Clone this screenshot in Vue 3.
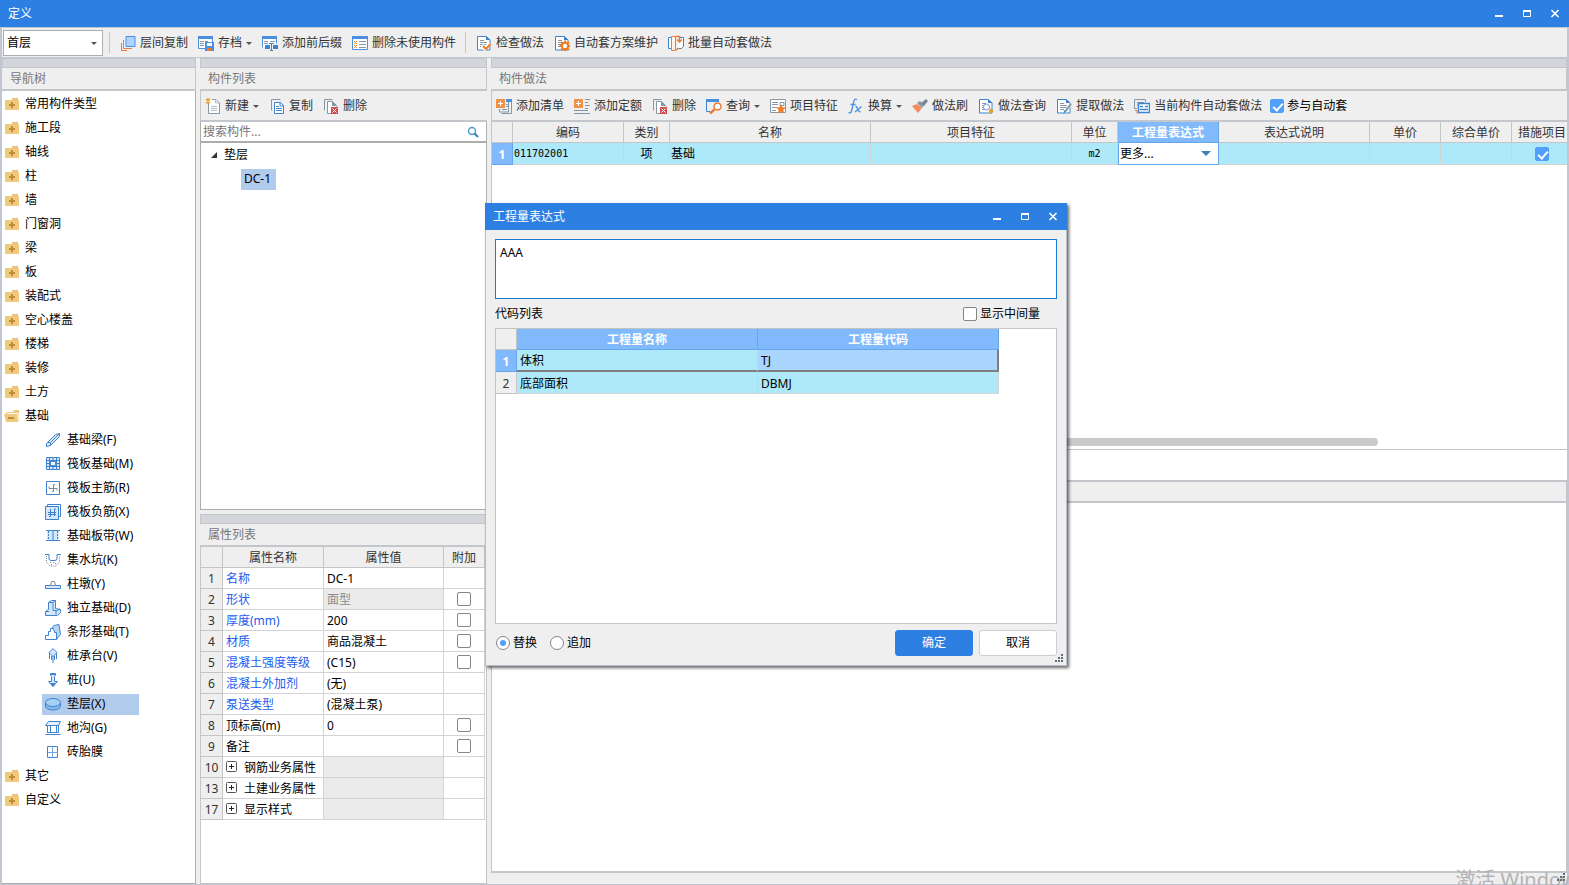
<script setup>
import { ref } from 'vue'

const folder = '<path d="M8 2h6v2H8z" fill="#eac078"/><path d="M1 4h14v10H1z" fill="#f0c97f"/><path d="M7 6h2v2h2v2H9v2H7v-2H5V8h2z" fill="#bd8c34"/>'
const page = '<path d="M1.500 1.500h9l3.500 3.500v10h-12.500z" fill="#fff" stroke="#3f83cf"/><path d="M10 1v4h4.500z" fill="#3f83cf"/><path d="M4 5.500h4M4 7.500h7M4 9.500h7M4 11.500h4" stroke="#8797a5"/>'

const icons = {
  folder,
  folderOpen: '<path d="M2 13V4h7l1-2h5v11z" fill="#f0c97f"/><path d="M3 5.500h11v7" stroke="#fff" fill="none"/><path d="M0 6h12l2 8H2z" fill="#f0c97f"/><path d="M4 9h6v2H4z" fill="#bd8c34"/>',
  layers: '<path d="M6 1.500h9v10H6z" fill="#add4ff" stroke="#4a8fe0"/><path d="M3.500 5v8.500H12M1.500 8v7.500H7" fill="none" stroke="#e87b36"/>',
  archive: '<path d="M.500 1.500h14v12H.500z" fill="#fff" stroke="#4a8fe0"/><path d="M0 1h15v3H0z" fill="#4a8fe0"/><path d="M2 6.500h4M7 6.500h3M2 8.500h4M2 10.500h4" stroke="#8797a5"/><path d="M7 7h9v9H7z" fill="#4a8fe0"/><path d="M9 8h5v3H9z" fill="#fff"/><path d="M9 13h4v3H9z" fill="#f07c24"/>',
  affix: '<path d="M.500 12.500V1.500h14v7" fill="#fff" stroke="#4a8fe0"/><path d="M0 1h15v3H0z" fill="#4a8fe0"/><path d="M2 6.500h4M8 6.500h5M2 8.500h4" stroke="#8797a5"/><path d="M3 10h5v4H3zM11 10h5v4h-5z" fill="#3f83cf"/><path d="M7 8.500h5M9.500 8v8M8 15.500h3" stroke="#3f83cf" fill="none"/>',
  unused: '<path d="M.500 1.500h15v13H.500z" fill="#fff" stroke="#4a8fe0"/><path d="M0 1h16v3H0z" fill="#4a8fe0"/><path d="M2 6l3 3M5 6L2 9M2 10l3 3M5 10l-3 3" stroke="#f09a32"/><path d="M7 6.500h7M7 9.500h7M7 12.500h7" stroke="#8797a5"/>',
  check: page + '<path d="M6 10.500l3 3 5-5" fill="none" stroke="#fff" stroke-width="4"/><path d="M7 11l3 3 4.500-5" fill="none" stroke="#f07c24" stroke-width="2"/>',
  gear: page + '<circle cx="11" cy="11" r="3.200" fill="#fff" stroke="#f07c24" stroke-width="2"/><path d="M11 5.500v2M11 14.500v2M5.500 11h2M14.500 11h2M7 7l1.500 1.500M13.500 13.500L15 15M15 7l-1.500 1.500M8.500 13.500L7 15" stroke="#f07c24" stroke-width="2"/>',
  batch: '<path d="M4 2.500H.500v11H4M12 2.500h3.500v9l-2 2H9" fill="#fff" stroke="#3f83cf"/><path d="M3.500 1.500h4v14h-4z" fill="#fff3ea" stroke="#e87b36"/><path d="M7.500 1.500h4v5M9 4.500L11.500 7 14 4.500M8 15l3-2" fill="none" stroke="#e87b36" stroke-width="1.500"/>',
  create: '<path d="M3.500 5v10.500h11V5L11 1.500H7" fill="#fff" stroke="#8797a5"/><path d="M10.500 1.500V5h4M6 8.500h6M6 10.500h6M6 12.500h6" fill="none" stroke="#b5bec7"/><path d="M1 1l4 4M5 1L1 5M3 0v6" stroke="#f0a030" stroke-width="1.500"/>',
  copy: '<path d="M2.500 12.500V1.500h9" fill="none" stroke="#8797a5"/><path d="M5.500 4.500h6l3 3v8h-9z" fill="#fff" stroke="#3f83cf"/><path d="M11 4v4h4M7 8.500h3M7 10.500h6M7 12.500h6" fill="none" stroke="#3f83cf"/>',
  remove: '<path d="M1.500 12.500V1.500h8" fill="none" stroke="#8797a5"/><path d="M10 15.500H4.500v-12h5l4 4v1" fill="#fff" stroke="#8797a5"/><path d="M9 3v5h5z" fill="#8797a5"/><path d="M8 9h7v7H8z" fill="#d14d51"/><path d="M9.500 10.500l4 4M13.500 10.500l-4 4" stroke="#fff"/>',
  addList: '<path d="M3.500 11v3h9v-10M5.500 15.500h10V3" fill="none" stroke="#8797a5"/><path d="M10 1h6v3h-6z" fill="#4a8fe0"/><path d="M6 11.500h5M10 6.500h2M10 8.500h2" stroke="#8797a5"/><path d="M0 1h9v9H0z" fill="#f09346"/><path d="M4.500 3v5M2 5.500h5" stroke="#fff"/>',
  addQuota: '<path d="M11 1.500h5M11 4.500h3M11 7.500h5M11 10.500h3M0 12.500h14M0 15.500h16" stroke="#8797a5"/><path d="M0 1h9v9H0z" fill="#f09346"/><path d="M4.500 3v5M2 5.500h5" stroke="#fff"/>',
  query: '<path d="M.500 2v11.500H4" fill="none" stroke="#3f83cf"/><path d="M0 1h13v3H0z" fill="#4a8fe0"/><circle cx="11.500" cy="8.500" r="3.500" fill="#fff" stroke="#e87b36" stroke-width="1.500"/><path d="M8.500 11.500L4 15.500" stroke="#e87b36" stroke-width="2.500"/>',
  feature: '<path d="M.500 1.500h15v13H.500z" fill="#fff" stroke="#8797a5"/><path d="M2 4.500h6M2 6.500h6M2 9.500h5M2 12.500h4M10 4.500h4v3h-4z" stroke="#8797a5" fill="none"/><path d="M11 6l1.400 3.200 3.600.3-2.700 2.300.8 3.700-3.100-2-3.100 2 .8-3.700L6 9.500l3.600-.3z" fill="#f07c24"/>',
  fx: '<path d="M9 1.500C6 0 5.500 4 4.500 9S3 16 .500 14.500M2.500 6.500h5" fill="none" stroke="#4a8fe0" stroke-width="1.300"/><path d="M7.500 8c2 0 2 6 5 6M13.500 8.500L7 14" fill="none" stroke="#4a8fe0" stroke-width="1.300"/>',
  brush: '<path d="M0 8l5-2 5 4-4 5z" fill="#f58b5b"/><path d="M5 5l3-2 4 4-2 3z" fill="#8797a5"/><path d="M9 5l5-4 2 2-4 5z" fill="#7b8894"/>',
  lookup: page + '<circle cx="8.500" cy="9" r="3" fill="#fff" stroke="#6b9be0"/><path d="M13 10l2.500 3-2.500 3-2.500-3z" fill="#f09a22"/>',
  extract: page + '<path d="M14.500 4.500l1.500 2-6 8-2 .5.500-2.500z" fill="#8797a5" stroke="#fff" stroke-width=".5"/><path d="M8 12l2 2-2.500 2z" fill="#21a6b8"/>',
  current: '<path d="M3 10.500H.500v-9h11V4" fill="none" stroke="#8797a5"/><path d="M3 4.500h7M3 7h1" stroke="#8797a5"/><path d="M1 12.500h2v3" stroke="#e87b36" fill="none"/><path d="M4.500 5.500h11v9h-11z" fill="#fff" stroke="#3f83cf" stroke-width="1.500"/><path d="M6 8.500h3M11 8.500h3M6 11.500h8" stroke="#3f83cf" stroke-width="1.500"/>',
  beam: '<path d="M1.500 11.500l9-9 4-1 0 3-9 9-4 1z" fill="#d5e7fb" stroke="#3f83cf"/><path d="M5.500 13.500v-3h-3M6 10l8-8" fill="none" stroke="#3f83cf"/>',
  raft: '<path d="M1.500 1.500h13v12h-13z" fill="#d5e7fb" stroke="#3f83cf"/><path d="M4.500 2v11M11.500 2v11M2 4.500h12M2 10.500h12M8 2v3M8 10v3M2 7.500h3M11 7.500h3" fill="none" stroke="#3f83cf"/><path d="M5.500 5.500h5v4h-5z" fill="#fff" stroke="#3f83cf"/>',
  rebarMain: '<path d="M1.500 1.500h13v13h-13z" fill="#fff" stroke="#3f83cf"/><path d="M10 4.500H8.500v7H7M4 6.500v2h8v2" fill="none" stroke="#7c8c9c"/>',
  rebarNeg: '<path d="M2.500 2V.500h13v12h-2" fill="#fff" stroke="#3f83cf"/><path d="M.500 2.500h13v13H.500z" fill="#d5e7fb" stroke="#3f83cf"/><path d="M5.500 5v7.500H4M9.500 12V5H11M3 8.500h8M3 10.500h8" fill="none" stroke="#3f83cf"/>',
  strip: '<path d="M2 3h12v10H2z" fill="#d5e7fb"/><path d="M1 2.500h14M1 12.500h14M8 3v10" stroke="#3f83cf"/><path d="M3.500 3v10M12.500 3v10" stroke="#3f83cf" stroke-dasharray="2 1"/>',
  pit: '<path d="M0 2.500h4v5l2 1h4l2-1v-5h4" fill="none" stroke="#3f83cf"/><path d="M1.500 4v6l3.500 4h6l3.500-4V4" fill="none" stroke="#7c8c9c" stroke-dasharray="1 1"/><path d="M5 10.500h1M8 10.500h1M10 11.500h1M6 12.500h1" stroke="#7c8c9c"/>',
  pier: '<path d="M.500 9.500h15v3H.500z" fill="#d5e7fb" stroke="#3f83cf"/><path d="M6.500 5.500h3l1 4h-5z" fill="#fff" stroke="#7c8c9c"/>',
  isolated: '<path d="M.500 11.500l3-2v-7l3-2h4v8l5 1v3l-3 3H.500z" fill="#d5e7fb" stroke="#3f83cf"/><path d="M4 2.500h4v8h3v4M8 2.500l2-2M11 11l4-2M1 11.500h3" fill="none" stroke="#3f83cf"/>',
  stripBase: '<path d="M6 5.500l3-4 5-1 1.500 10-4 5H8z" fill="#b9d6f6" stroke="#3f83cf"/><path d="M.500 15.500v-4h3v-4h2v-3h3l1 4h2v7z" fill="#fff" stroke="#3f83cf"/>',
  cap: '<path d="M8 .500l4 4-4 4-4-4z" fill="#d5e7fb" stroke="#3f83cf"/><path d="M4.500 5v6M11.500 5v6M8 8v7M6.500 8v4M9.500 8v4" stroke="#3f83cf"/>',
  pile: '<path d="M5.500 1.500h5v2l-1 1v5h3l-4.500 5-4.500-5h3v-5l-1-1z" fill="#d5e7fb" stroke="#3f83cf"/><path d="M6 2h4v1H6zM5 11h6l-3 4z" fill="#3f83cf"/>',
  cushion: '<path d="M.500 7v3c0 2.500 3.500 4 7.500 4s7.500-1.500 7.500-4V7" fill="#83b7e8" stroke="#3f83cf"/><ellipse cx="8" cy="6.500" rx="7.500" ry="4" fill="#a6d0f3" stroke="#3f83cf"/>',
  trench: '<path d="M.500 5.500l3-4h12l-2 4zM2.500 6v7M5.500 6v7M11.500 6v7M13.500 5v8M.500 14.500h15M3 12.500h10" fill="#e5f0fc" stroke="#3f83cf"/>',
  brick: '<path d="M2.500 2.500h10v11h-10z" fill="#fff" stroke="#3f83cf"/><path d="M7.500 2v12M3 8.500h10" stroke="#6ea4e0"/>',
}

const mainTools = [
  [['layers', '层间复制'], ['archive', '存档', true], ['affix', '添加前后缀'], ['unused', '删除未使用构件']],
  [['check', '检查做法'], ['gear', '自动套方案维护'], ['batch', '批量自动套做法']],
]
const listTools = [['create', '新建', true], ['copy', '复制'], ['remove', '删除']]
const methodTools = [
  ['addList', '添加清单'], ['addQuota', '添加定额'], ['remove', '删除'], ['query', '查询', true],
  ['feature', '项目特征'], ['fx', '换算', true], ['brush', '做法刷'], ['lookup', '做法查询'],
  ['extract', '提取做法'], ['current', '当前构件自动套做法'],
]
const nav = [
  ...['常用构件类型', '施工段', '轴线', '柱', '墙', '门窗洞', '梁', '板', '装配式', '空心楼盖', '楼梯', '装修', '土方'].map(t => ({ t, icon: 'folder' })),
  { t: '基础', icon: 'folderOpen' },
  ...[['beam', '基础梁(F)'], ['raft', '筏板基础(M)'], ['rebarMain', '筏板主筋(R)'], ['rebarNeg', '筏板负筋(X)'],
    ['strip', '基础板带(W)'], ['pit', '集水坑(K)'], ['pier', '柱墩(Y)'], ['isolated', '独立基础(D)'],
    ['stripBase', '条形基础(T)'], ['cap', '桩承台(V)'], ['pile', '桩(U)'], ['cushion', '垫层(X)'],
    ['trench', '地沟(G)'], ['brick', '砖胎膜']].map(([icon, t]) => ({ t, icon, child: true })),
  { t: '其它', icon: 'folder' },
  { t: '自定义', icon: 'folder' },
]
const props = [
  { n: 1, k: '名称', v: 'DC-1', link: true },
  { n: 2, k: '形状', v: '面型', link: true, off: true, box: true },
  { n: 3, k: '厚度(mm)', v: '200', link: true, box: true },
  { n: 4, k: '材质', v: '商品混凝土', link: true, box: true },
  { n: 5, k: '混凝土强度等级', v: '(C15)', link: true, box: true },
  { n: 6, k: '混凝土外加剂', v: '(无)', link: true },
  { n: 7, k: '泵送类型', v: '(混凝土泵)', link: true },
  { n: 8, k: '顶标高(m)', v: '0', box: true },
  { n: 9, k: '备注', v: '', box: true },
  { n: 10, k: '钢筋业务属性', v: '', off: true, group: true },
  { n: 13, k: '土建业务属性', v: '', off: true, group: true },
  { n: 17, k: '显示样式', v: '', off: true, group: true },
]
const selected = ref('垫层(X)')
const expr = ref('AAA')
const mode = ref('replace')
const auto = ref(true)
const measure = ref(true)
const middle = ref(false)
</script>

<template>
  <div class="window">
    <header class="titlebar">
      <span>定义</span>
      <div class="controls">
        <button aria-label="最小化"><svg viewBox="0 0 28 27"><path d="M10 15h8v2h-8z" fill="#fff" /></svg></button>
        <button aria-label="最大化"><svg viewBox="0 0 28 27"><path d="M10.500 11v5.500h7V11" fill="none" stroke="#fff" /><path d="M10 10h8v2h-8z" fill="#fff" /></svg></button>
        <button aria-label="关闭"><svg viewBox="0 0 28 27"><path d="M10.500 10l7 7M17.500 10l-7 7" stroke="#fff" stroke-width="1.600" /></svg></button>
      </div>
    </header>

    <div class="frame">
      <div class="toolbar main-tools">
        <div class="combo floor">
          <select aria-label="楼层"><option>首层</option></select>
        </div>
        <template v-for="(group, g) in mainTools" :key="g">
          <i class="sep"></i>
          <button v-for="t in group" :key="t[1]" class="tool">
            <svg class="ico" viewBox="0 0 16 16" v-html="icons[t[0]]"></svg>{{ t[1] }}<i v-if="t[2]" class="caret"></i>
          </button>
        </template>
      </div>

      <div class="docks">
        <aside class="nav">
          <div class="strip"></div>
          <h2>导航树</h2>
          <ul class="tree nav-tree">
            <li v-for="n in nav" :key="n.t">
              <button :class="{ child: n.child, on: n.t === selected }" @click="selected = n.t">
                <svg class="ico" viewBox="0 0 16 16" v-html="icons[n.icon]"></svg>{{ n.t }}
              </button>
            </li>
          </ul>
        </aside>

        <div class="middle">
          <section class="panel">
            <div class="strip"></div>
            <h2>构件列表</h2>
            <div class="toolbar actions">
              <button v-for="t in listTools" :key="t[1]" class="tool">
                <svg class="ico" viewBox="0 0 16 16" v-html="icons[t[0]]"></svg>{{ t[1] }}<i v-if="t[2]" class="caret"></i>
              </button>
            </div>
            <div class="search">
              <input type="text" aria-label="搜索构件" placeholder="搜索构件...">
              <svg class="glass" viewBox="0 0 12 12"><circle cx="5" cy="5" r="3.500" fill="none" stroke="#4b9ccd" stroke-width="1.500" /><path d="M7.500 7.500L11 11" stroke="#2f82b8" stroke-width="2" /></svg>
            </div>
            <ul class="tree part-tree">
              <li><button><svg class="arrow" viewBox="0 0 8 8"><path d="M7 1v6H1z" fill="#333" /></svg>垫层</button></li>
              <li><button class="part on">DC-1</button></li>
            </ul>
          </section>

          <section class="panel">
            <div class="strip"></div>
            <h2>属性列表</h2>
            <div class="sheet">
              <table class="props">
                <colgroup><col class="p0"><col class="p1"><col class="p2"><col class="p3"></colgroup>
                <thead><tr><th></th><th>属性名称</th><th>属性值</th><th>附加</th></tr></thead>
                <tbody>
                  <tr v-for="p in props" :key="p.n">
                    <th>{{ p.n }}</th>
                    <td :class="{ link: p.link }">
                      <button v-if="p.group" class="plus" aria-label="展开"><svg viewBox="0 0 11 11"><rect x=".5" y=".5" width="10" height="10" rx="1" fill="#fff" stroke="#555" /><path d="M3 5.500h5M5.500 3v5" stroke="#222" /></svg></button>{{ p.k }}
                    </td>
                    <td :class="{ off: p.off }">{{ p.v }}</td>
                    <td class="mid tick"><input v-if="p.box" type="checkbox" :aria-label="p.k + '附加'"></td>
                  </tr>
                </tbody>
              </table>
            </div>
          </section>
        </div>

        <main class="method">
          <section class="panel upper">
            <div class="strip"></div>
            <h2>构件做法</h2>
            <div class="toolbar actions">
              <button v-for="t in methodTools" :key="t[1]" class="tool">
                <svg class="ico" viewBox="0 0 16 16" v-html="icons[t[0]]"></svg>{{ t[1] }}<i v-if="t[2]" class="caret"></i>
              </button>
              <label class="opt auto"><input v-model="auto" type="checkbox">参与自动套</label>
            </div>
            <div class="grid-area">
              <table class="items">
                <colgroup>
                  <col class="c21"><col class="c111"><col class="c46"><col class="c201"><col class="c201"><col class="c46"><col class="c101"><col class="c151"><col class="c71"><col class="c71"><col>
                </colgroup>
                <thead>
                  <tr><th></th><th>编码</th><th>类别</th><th>名称</th><th>项目特征</th><th>单位</th><th class="hot">工程量表达式</th><th>表达式说明</th><th>单价</th><th>综合单价</th><th>措施项目</th></tr>
                </thead>
                <tbody>
                  <tr>
                    <th class="hot">1</th>
                    <td class="mono">011702001</td>
                    <td class="mid">项</td>
                    <td>基础</td>
                    <td></td>
                    <td class="mid mono">m2</td>
                    <td class="editor"><div class="combo blue"><select aria-label="工程量表达式"><option>更多...</option></select></div></td>
                    <td></td><td></td><td></td>
                    <td class="mid tick"><input v-model="measure" type="checkbox" aria-label="措施项目"></td>
                  </tr>
                </tbody>
              </table>
              <div class="scroll"><i></i></div>
            </div>
          </section>
          <div class="blank"></div>
          <div class="divider"></div>
          <div class="detail"></div>
          <footer class="status"></footer>
        </main>
      </div>
    </div>

    <div class="watermark">激活 Windows</div>
    <svg class="grip" viewBox="0 0 8 8"><path d="M6 0h2v2H6zM3 3h2v2H3zM6 3h2v2H6zM0 6h2v2H0zM3 6h2v2H3zM6 6h2v2H6z" fill="#666c76" /></svg>

    <div class="dialog" role="dialog" aria-label="工程量表达式">
      <header class="titlebar">
        <span>工程量表达式</span>
        <div class="controls">
          <button aria-label="最小化"><svg viewBox="0 0 28 27"><path d="M10 15h8v2h-8z" fill="#fff" /></svg></button>
          <button aria-label="最大化"><svg viewBox="0 0 28 27"><path d="M10.500 11v5.500h7V11" fill="none" stroke="#fff" /><path d="M10 10h8v2h-8z" fill="#fff" /></svg></button>
          <button aria-label="关闭"><svg viewBox="0 0 28 27"><path d="M10.500 10l7 7M17.500 10l-7 7" stroke="#fff" stroke-width="1.600" /></svg></button>
        </div>
      </header>
      <div class="body">
        <textarea v-model="expr" aria-label="表达式" spellcheck="false"></textarea>
        <div class="row caption">
          <span>代码列表</span>
          <label class="opt"><input v-model="middle" type="checkbox">显示中间量</label>
        </div>
        <div class="codes-box">
          <table class="codes">
            <colgroup><col class="c21"><col class="c241"><col class="c241"></colgroup>
            <thead><tr><th></th><th class="hot">工程量名称</th><th class="hot">工程量代码</th></tr></thead>
            <tbody>
              <tr class="current"><th class="hot">1</th><td>体积</td><td>TJ</td></tr>
              <tr><th>2</th><td>底部面积</td><td>DBMJ</td></tr>
            </tbody>
          </table>
        </div>
        <div class="row foot">
          <div class="modes">
            <label class="opt"><input v-model="mode" type="radio" name="mode" value="replace">替换</label>
            <label class="opt"><input v-model="mode" type="radio" name="mode" value="append">追加</label>
          </div>
          <div class="btns">
            <button class="btn primary">确定</button>
            <button class="btn">取消</button>
          </div>
        </div>
      </div>
      <svg class="grip" viewBox="0 0 8 8"><path d="M6 0h2v2H6zM3 3h2v2H3zM6 3h2v2H6zM0 6h2v2H0zM3 6h2v2H3zM6 6h2v2H6z" fill="#666c76" /></svg>
    </div>
  </div>
</template>

<style>
html, body { margin: 0; overflow: hidden; }
</style>

<style scoped>
* { box-sizing: border-box; }
.window {
  position: relative; display: flex; flex-direction: column; height: 100vh; overflow: hidden;
  background: #efefef; color: #000; font: 12px/20px "Noto Sans", "Noto Sans CJK SC", sans-serif;
}
button, input, select, textarea { font: inherit; color: inherit; margin: 0; padding: 0; border: 0; background: none; outline: none; }
svg { display: block; flex: none; }
ul { margin: 0; padding: 0; list-style: none; }
table { border-collapse: separate; border-spacing: 0; table-layout: fixed; line-height: 18px; }
th, td { padding: 2px 0 0; overflow: hidden; white-space: nowrap; font-weight: 400; border-right: 1px solid #d3d3d3; border-bottom: 1px solid #d3d3d3; }
th { background: #efefef; color: #333; border-color: #c5c5c5; text-align: center; }

.titlebar { display: flex; flex: none; justify-content: space-between; height: 27px; padding-left: 8px; line-height: 27px; background: #2d7fe2; color: #fff; }
.controls { display: flex; }
.controls button, .controls svg { width: 28px; height: 27px; }

.frame { display: flex; flex: 1; flex-direction: column; min-height: 0; border: solid #c0c6d2; border-width: 0 2px 1px; }
.toolbar { display: flex; flex: none; align-items: center; gap: 10px; overflow: hidden; white-space: nowrap; }
.main-tools { height: 31px; border: solid #c3c6ca; border-width: 1px 0; }
.tool { display: flex; align-items: center; gap: 4px; padding-top: 1px; color: #333; }
.ico { width: 16px; height: 16px; }
.caret { border: 3px solid transparent; border-top-color: #555; border-bottom: 0; }
.sep { width: 1px; height: 21px; background: #c4c6ca; }
.sep ~ .sep { margin-left: -1px; }
.combo { position: relative; background: #fff; }
.combo select { display: block; width: 100%; height: 100%; appearance: none; }
.combo::after { content: ""; position: absolute; right: 5px; top: 50%; margin-top: -1px; border: 3px solid transparent; border-top-color: #555; border-bottom: 0; pointer-events: none; }
.floor { width: 100px; height: 26px; margin: 0 -4px 0 1px; border: 1px solid #adadad; }
.floor select { padding-left: 3px; }

.docks { display: flex; flex: 1; gap: 4px; min-height: 0; }
.nav { display: flex; flex: none; flex-direction: column; width: 194px; }
.strip { flex: none; height: 10px; border: 1px solid #c3c6ca; background: #d3d5db; }
h2 { flex: none; height: 23px; margin: 0; padding-left: 8px; font: inherit; line-height: 21px; color: #777; border: 1px solid #c3c6ca; border-width: 0 1px 2px 0; }
.tree { flex: 1; background: #fff; border: 1px solid #adadad; }
.tree button { display: flex; align-items: center; height: 21px; white-space: nowrap; }
.tree li { display: flex; align-items: center; height: 24px; }
.nav-tree { padding-top: 1px; border-top: 0; border-left: 0; }
.nav-tree button { gap: 5px; margin-left: 1px; padding-left: 1px; padding-right: 34px; }
.nav-tree button.child { margin-left: 40px; padding-left: 3px; gap: 6px; }
.tree button.on { background: #b1cbec; }

.middle { display: grid; flex: none; grid-template-rows: minmax(0, 452fr) minmax(0, 370fr); gap: 4px; width: 287px; }
.panel { display: flex; flex-direction: column; min-width: 0; min-height: 0; }
.actions { height: 31px; padding-left: 4px; border-left: 1px solid #c3c6ca; border-bottom: 2px solid #c3c6ca; }
.search { display: flex; flex: none; align-items: center; height: 20px; padding-right: 7px; background: #fff; border: solid #adadad; border-width: 0 1px 1px; }
.search input { flex: 1; min-width: 0; padding-left: 2px; }
.search input::placeholder { color: #777; opacity: 1; }
.glass { width: 12px; height: 12px; }
.arrow { width: 8px; height: 8px; }
.part-tree button { gap: 6px; margin-left: 9px; }
.part-tree .part { margin-left: 40px; padding: 0 5px 0 3px; }

.sheet { flex: 1; overflow: hidden; background: #fff; border: 1px solid #c5c5c5; border-top: 0; }
.props .p0 { width: 22px; } .props .p1 { width: 101px; } .props .p2 { width: 120px; } .props .p3 { width: 41px; }
.props { width: 284px; }
.props tr { height: 21px; }
.props td { padding-left: 3px; }
td.link { color: #1c5cf0; }
.props .off { background: #ebebeb; color: #8b8b8b; }
td.mid, .props td.mid { padding-left: 0; text-align: center; }
td.tick, .props td.tick { padding: 0; line-height: 0; }
.plus { display: inline-block; width: 11px; height: 11px; margin-right: 7px; }
.plus svg { width: 11px; height: 11px; }

input[type="checkbox"], input[type="radio"] { position: relative; display: inline-block; flex: none; width: 14px; height: 14px; appearance: none; vertical-align: middle; background: #fff; border: 1px solid #858585; border-radius: 2px; }
input[type="radio"] { border-radius: 50%; }
input[type="checkbox"]:checked { background: #4f9ffb; border-color: #4f9ffb; }
input[type="checkbox"]:checked::after { content: ""; position: absolute; left: 4px; top: 1px; width: 4px; height: 8px; border: solid #fff; border-width: 0 2px 2px 0; transform: rotate(42deg); }
input[type="radio"]:checked::after { content: ""; position: absolute; inset: 3px; border-radius: 50%; background: #4f9ffb; }
.opt { display: flex; align-items: center; gap: 3px; }
.auto { margin-left: -2px; }

.method { display: grid; flex: 1; grid-template-rows: minmax(0, 392fr) 30px 23px minmax(0, 368fr) 13px; min-width: 0; }
.grid-area { display: flex; flex: 1; flex-direction: column; justify-content: space-between; min-height: 0; overflow: hidden; background: #fff; border: solid #c3c3c3; border-width: 0 0 1px 1px; }
.items { width: calc(100% + 6px); }
.items thead tr { height: 21px; }
.items tbody tr { height: 22px; }
.items td { padding: 0 0 0 1px; background: #aee9fa; }
.items td.mid { padding: 0; }
.c21 { width: 21px; } .c111 { width: 111px; } .c46 { width: 46px; } .c201 { width: 201px; }
.c101 { width: 101px; } .c151 { width: 151px; } .c71 { width: 71px; } .c241 { width: 241px; }
.mono { font-family: "DejaVu Sans Mono", monospace; font-size: 10px; }
th.hot { background: #80bafc; color: #fff; font-weight: 700; border-color: #65a6ea; }
.items td.editor { padding: 0; border: 1px solid #65a6ea; border-width: 0 1px 1px; background: #fff; }
.blue { height: 21px; }
.blue select { padding: 1px 0 0 1px; }
.blue::after { right: 7px; border-width: 5px 5px 0; margin-top: -3px; border-top-color: #3f83b4; }
.scroll { padding-bottom: 3px; }
.scroll i { display: block; width: 82.400%; height: 8px; border-radius: 4px; background: #cacaca; }
.blank { background: #fff; }
.divider { border: solid #c3c6ca; border-width: 2px 1px 2px 1px; }
.detail { background: #fff; border: solid #c3c6ca; border-width: 0 1px 0 1px; }
.status { border-top: 2px solid #c3c6ca; }

.watermark { position: absolute; right: -17px; bottom: -9px; font-size: 20px; line-height: 28px; color: #b3b3b3; white-space: nowrap; }
.grip { position: absolute; right: 4px; bottom: 4px; width: 8px; height: 8px; }

.dialog { position: absolute; left: 485px; top: 203px; display: flex; flex-direction: column; width: 582px; background: #efefef; box-shadow: 2px 2px 3px rgba(0, 0, 0, .6); }
.body { padding: 9px; border: solid #b9c0cc; border-width: 0 1px 1px; }
textarea { display: block; width: 100%; height: 60px; padding: 3px 4px; resize: none; background: #fff; border: 1px solid #1a79cf; }
.row { display: flex; align-items: center; justify-content: space-between; }
.caption { height: 29px; padding-right: 17px; }
.codes-box { height: 296px; background: #fff; border: 1px solid #c3c3c3; }
.codes { width: 503px; }
.codes tr { height: 22px; }
.codes thead tr { height: 21px; }
.codes td { padding-left: 3px; background: #aee9fa; }
.codes .current td { border-bottom: 2px solid #7f7f7f; }
.codes .current td:last-child { background: #aad5ff; border-right: 2px solid #7f7f7f; }
.foot { padding-top: 6px; }
.modes { display: flex; gap: 13px; padding-left: 1px; }
.btns { display: flex; gap: 6px; }
.btn { width: 78px; height: 26px; background: #fff; border: 1px solid #cfcfcf; border-radius: 3px; }
.btn.primary { background: #2d7fe2; border-color: #2d7fe2; color: #fff; }
</style>
